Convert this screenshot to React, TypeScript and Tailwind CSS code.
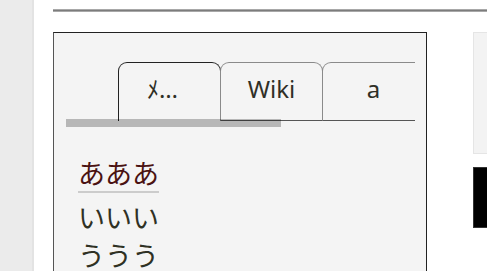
const jp = "font-['Noto_Sans','Noto_Sans_CJK_JP',sans-serif]";

const tabs = [
  { label: "ﾒ…", active: true },
  { label: "Wiki", active: false },
  { label: "a", active: false },
];

const items = ["いいい", "ううう"];

export default function App() {
  return (
    <div className={`flex h-[271px] w-[487px] overflow-hidden bg-white ${jp}`}>
      {/* sidebar */}
      <div className="w-[34px] shrink-0 border-r-2 border-[#e3e3e3] bg-[#ebebeb]" />

      {/* main */}
      <div className="flex-1 pl-[19px]">
        <div className="mt-[9px] h-[3px] border-y border-[#a8a8a8] bg-[#7c7c7c]" />

        <div className="mt-[20px] flex">
          {/* tab box */}
          <div className="h-[260px] w-[374px] shrink-0 border border-[#222] border-l-[#555] bg-[#f4f4f4]">
            <div className="relative ml-[12px] mt-[29px] h-[65px] w-[349px] overflow-hidden">
              <div className="flex pl-[52px]">
                {tabs.map((t, i) =>
                  t.active ? (
                    <div
                      key={i}
                      className="flex h-[59px] w-[103px] shrink-0 items-center justify-start rounded-t-[9px] border border-b-0 border-[#222] pb-[6px] pl-[28px] text-[24px] text-[#2f2f26]"
                    >
                      {t.label}
                    </div>
                  ) : (
                    <div
                      key={i}
                      className="-ml-px flex h-[59px] w-[103px] shrink-0 items-center justify-center rounded-t-[9px] border border-[#8a8a8a] border-b-[#555] pb-[6px] text-[24px] text-[#2f2f26]"
                    >
                      {t.label}
                    </div>
                  )
                )}
              </div>
              {/* scroll thumb */}
              <div className="absolute left-0 top-[57px] h-[8px] w-[215px] bg-black/25" />
            </div>

            <div className="pl-[24px] pt-[30px] text-[27px]">
              <div className="w-fit border-b-2 border-[#cccccc] leading-[34px] text-[#4a1212]">
                あああ
              </div>
              <div className="mt-[6px]">
                {items.map((s) => (
                  <div key={s} className="leading-[38px] text-[#2f3124]">
                    {s}
                  </div>
                ))}
              </div>
            </div>
          </div>

          {/* right column */}
          <div className="ml-[46px] w-[40px] shrink-0">
            <div className="h-[122px] border border-[#e5e5e5] bg-[#f3f3f3]" />
            <div className="mt-[13px] h-[61px] border border-[#333] bg-black" />
          </div>
        </div>
      </div>
    </div>
  );
}
